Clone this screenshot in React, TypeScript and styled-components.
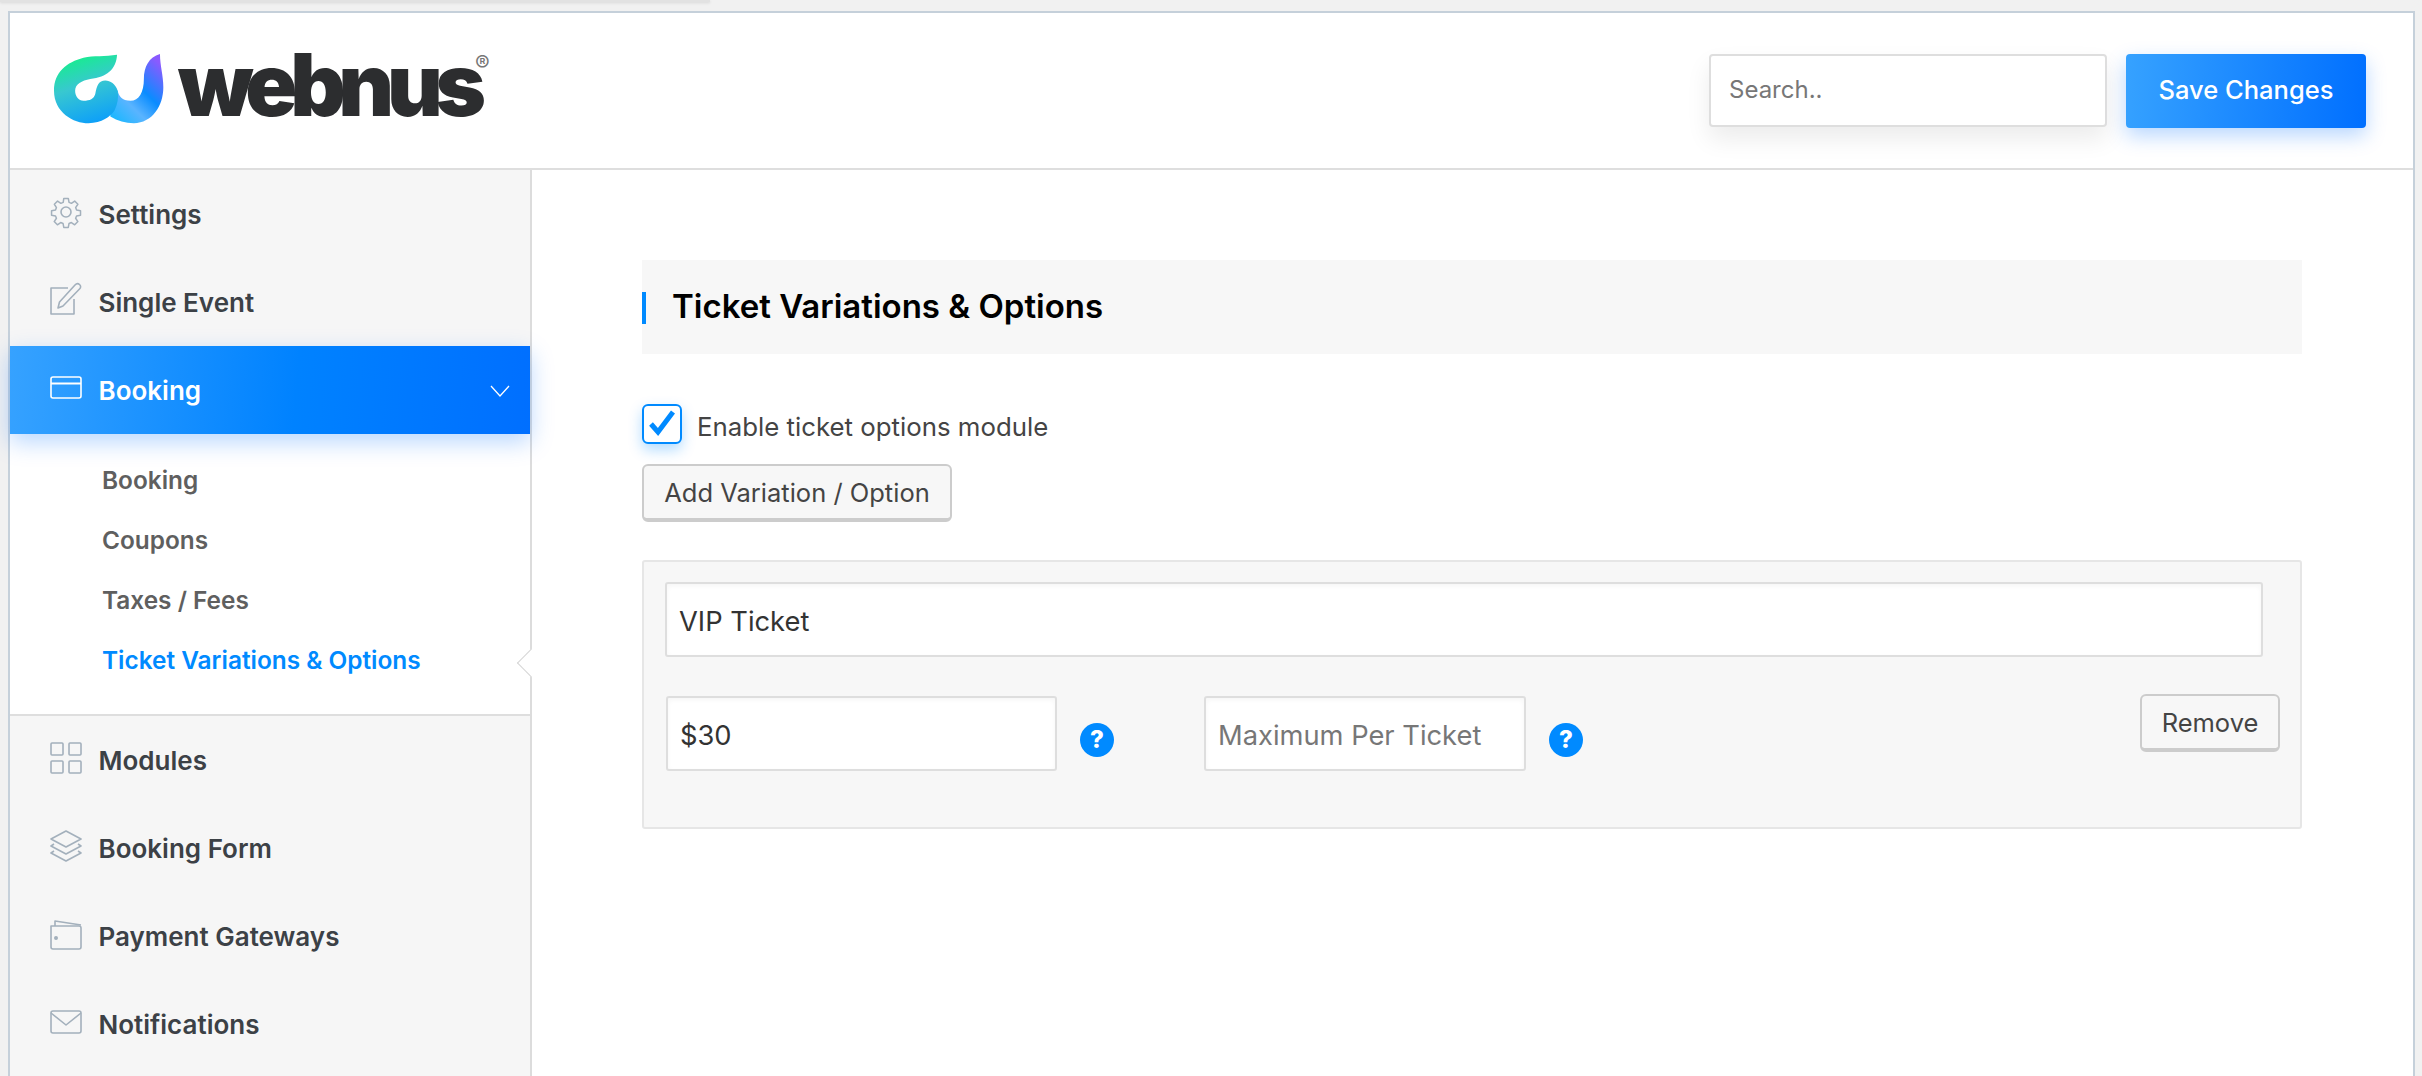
import { createGlobalStyle, styled } from "styled-components";
import { ReactNode } from "react";

const GlobalStyle = createGlobalStyle`
  html, body {
    margin: 0;
    height: 100%;
    background: #f1f1f1;
    overflow: hidden;
  }
  * { box-sizing: border-box; }
  body {
    font-family: Inter, "Liberation Sans", sans-serif;
    -webkit-font-smoothing: antialiased;
  }
`;

const Page = styled.div`
  height: 1076px;
  overflow: hidden;
`;
const TopStrip = styled.div`
  width: 710px;
  height: 2px;
  margin-bottom: 9px;
  background: #e2e2e2;
  box-shadow: 0 1px 3px rgba(0, 0, 0, 0.12);
`;
const Frame = styled.div`
  width: 2407px;
  margin-left: 8px;
  height: 1065px;
  border: 2px solid #c5d0da;
  border-bottom: 0;
  background: #fff;
  display: flex;
  flex-direction: column;
`;
const Header = styled.header`
  height: 157px;
  flex: none;
  border-bottom: 2px solid #dedede;
  padding: 41px 47px 0 44px;
  display: flex;
  justify-content: space-between;
  align-items: flex-start;
`;
const Logo = styled.div`
  display: flex;
  align-items: flex-start;
  gap: 14px;
  position: relative;
`;
const LogoMark = styled.svg`
  width: 110px;
  height: 70px;
  display: block;
`;
const Wordmark = styled.span`
  font-size: 86px;
  font-weight: 900;
  line-height: 70px;
  letter-spacing: -7.3px;
  color: #2c2d2f;
  margin-top: -4px;
`;
const Registered = styled.span`
  position: absolute;
  left: 421px;
  top: -3px;
  font-size: 22px;
  line-height: 24px;
  color: #777;
`;
const HeaderActions = styled.div`
  display: flex;
  gap: 19px;
`;
const SearchInput = styled.input`
  width: 398px;
  height: 73px;
  border: 2px solid #dedede;
  border-radius: 4px;
  padding: 0 18px 2px;
  font: 400 24px Inter, sans-serif;
  background: #fff;
  outline: none;
  box-shadow: 0 12px 24px rgba(0, 0, 0, 0.08);
  &::placeholder { color: #777; opacity: 1; }
`;
const SaveButton = styled.button`
  width: 240px;
  height: 74px;
  border: 0;
  border-radius: 4px;
  padding: 0 0 4px;
  color: #fff;
  font: 500 25.5px Inter, sans-serif;
  background: linear-gradient(95deg, #36a2ff 0%, #006fff 100%);
  box-shadow: 0 8px 20px rgba(0, 111, 255, 0.28);
`;
const Body = styled.div`
  flex: 1;
  display: flex;
  min-height: 0;
`;
const Sidebar = styled.nav`
  width: 522px;
  flex: none;
  background: #f6f6f6;
  border-right: 2px solid #dcdcdc;
  position: relative;
`;
const NavItem = styled.div<{ $active?: boolean }>`
  height: 88px;
  padding: 1px 0 0 40px;
  display: flex;
  align-items: center;
  gap: 16.5px;
  font-size: 26px;
  font-weight: 600;
  color: ${(p) => (p.$active ? "#fff" : "#3c4146")};
  position: relative;
  ${(p) =>
    p.$active &&
    `
    background: linear-gradient(95deg, #36a2ff 0%, #0082ff 55%, #006fff 100%);
    box-shadow: 0 8px 22px rgba(0, 111, 255, 0.28);
    z-index: 1;
  `}
`;
const NavIcon = styled.svg`
  width: 32px;
  height: 36px;
  flex: none;
  margin-top: -6px;
  fill: none;
  stroke: currentColor;
  stroke-width: 1.6;
  stroke-linejoin: round;
`;
const IconTint = styled.span<{ $active?: boolean }>`
  display: flex;
  color: ${(p) => (p.$active ? "#fff" : "#a3b0bc")};
`;
const Chevron = styled.svg`
  position: absolute;
  right: 20px;
  top: 39px;
  width: 20px;
  height: 12px;
  fill: none;
  stroke: #fff;
  stroke-width: 1.3;
`;
const SubMenu = styled.div`
  background: #fff;
  border-bottom: 2px solid #dedede;
  padding: 16px 0 24px 92px;
  height: 282px;
  position: relative;
`;
const SubItem = styled.div<{ $active?: boolean }>`
  height: 60px;
  display: flex;
  align-items: center;
  font-size: 24.4px;
  font-weight: 600;
  color: ${(p) => (p.$active ? "#008aff" : "#5f5f5f")};
`;
const Notch = styled.span`
  position: absolute;
  right: -11px;
  top: 219px;
  width: 20px;
  height: 20px;
  background: #fff;
  border-left: 1.5px solid #d6d6d6;
  border-bottom: 1.5px solid #d6d6d6;
  transform: rotate(45deg);
`;
const Main = styled.main`
  flex: 1;
  padding: 90px 111px 0 110px;
  min-width: 0;
`;
const TitleBar = styled.div`
  height: 94px;
  background: #f7f7f7;
  display: flex;
  align-items: center;
  padding: 0 0 2px 30px;
  position: relative;
  &::before {
    content: "";
    position: absolute;
    left: 0;
    top: 32px;
    width: 4px;
    height: 32px;
    background: #008aff;
  }
`;
const Title = styled.h2`
  margin: 0;
  font-size: 33px;
  font-weight: 600;
  color: #000;
`;
const CheckRow = styled.label`
  margin-top: 50px;
  display: flex;
  align-items: center;
  gap: 15px;
  font-size: 25.8px;
  color: #444;
`;
const CheckBox = styled.span`
  width: 40px;
  height: 40px;
  border: 2px solid #008aff;
  border-radius: 6px;
  background: #fff;
  box-shadow: 0 6px 14px rgba(0, 138, 255, 0.3);
  display: flex;
  align-items: center;
  justify-content: center;
`;
const CheckIcon = styled.svg`
  width: 36px;
  height: 36px;
  fill: none;
  stroke: #008aff;
  stroke-width: 5;
`;
const CheckText = styled.span`
  margin-top: 5px;
`;
const GreyButton = styled.button<{ $wide?: boolean }>`
  width: ${(p) => (p.$wide ? "310px" : "140px")};
  height: 58px;
  flex: none;
  padding: 1px 0 0;
  border: 2px solid #ccc;
  border-bottom-width: 4px;
  border-radius: 6px;
  background: #f7f7f7;
  color: #444;
  font: 400 25.5px Inter, sans-serif;
`;
const AddRow = styled.div`
  margin-top: 20px;
`;
const Panel = styled.section`
  margin-top: 38px;
  height: 269px;
  background: #f7f7f7;
  border: 2px solid #e6e6e6;
  border-radius: 3px;
  padding: 20px 20px 0 21px;
`;
const TextInput = styled.input<{ $width: number }>`
  width: ${(p) => p.$width}px;
  height: 75px;
  flex: none;
  border: 2px solid #dedede;
  border-radius: 3px;
  padding: 3px 12px 0;
  font: 400 27.3px Inter, sans-serif;
  color: #333;
  background: #fff;
  outline: none;
  box-shadow: inset 0 2px 5px rgba(0, 0, 0, 0.04);
  &::placeholder { color: #777; opacity: 1; }
`;
const NameRow = styled.div`
  display: flex;
`;
const PriceRow = styled.div`
  margin-top: 39px;
  padding-left: 1px;
  display: flex;
  align-items: flex-start;
`;
const Help = styled.span<{ $gapAfter?: number }>`
  width: 34px;
  height: 34px;
  flex: none;
  margin: 27px ${(p) => p.$gapAfter ?? 0}px 0 23px;
  border-radius: 50%;
  background: #008aff;
  color: #fff;
  font-size: 24px;
  font-weight: 800;
  line-height: 34px;
  text-align: center;
`;
const RemoveSlot = styled.div`
  margin: -2px 0 0 auto;
`;

const NavEntry = ({
  label,
  active,
  children,
}: {
  label: string;
  active?: boolean;
  children: ReactNode;
}) => (
  <NavItem $active={active}>
    <IconTint $active={active}>
      <NavIcon viewBox="0 0 32 36">{children}</NavIcon>
    </IconTint>
    {label}
    {active && (
      <Chevron viewBox="0 0 20 12">
        <path d="M1 1l9 10 9-10" />
      </Chevron>
    )}
  </NavItem>
);

const gearPath =
  "M13.6 2.6h4.8l.8 4.2 2.5 1 3.5-2.4 3.4 3.4-2.4 3.5 1 2.5 4.2.8v4.8l-4.2.8-1 2.5 2.4 3.5-3.4 3.4-3.5-2.4-2.5 1-.8 4.2h-4.8l-.8-4.2-2.5-1-3.5 2.4-3.4-3.4 2.4-3.5-1-2.5-4.2-.8v-4.8l4.2-.8 1-2.5L3.6 8.800l3.4-3.4 3.5 2.4 2.500-1z";

const App = () => (
  <Page>
    <GlobalStyle />
    <TopStrip />
    <Frame>
      <Header>
        <Logo>
          <LogoMark viewBox="72 76 328 208">
            <defs>
              <linearGradient id="logoLeft" x1="0.3" y1="0" x2="0.6" y2="1">
                <stop offset="0" stopColor="#14f088" />
                <stop offset="0.45" stopColor="#38c8d0" />
                <stop offset="1" stopColor="#0ea0f8" />
              </linearGradient>
              <linearGradient id="logoRight" x1="0" y1="1" x2="0.75" y2="0">
                <stop offset="0" stopColor="#0cb8ff" />
                <stop offset="0.35" stopColor="#5ab4ff" />
                <stop offset="0.6" stopColor="#0a8cff" />
                <stop offset="1" stopColor="#8a5aff" />
              </linearGradient>
            </defs>
            <path
              fill="url(#logoRight)"
              d="M240 262C262 275 285 282 310 282C365 282 398 230 398 175C398 140 388 110 388 76C355 85 340 115 340 150C340 190 325 215 300 215C275 215 265 200 262 185L240 190Z"
            />
            <path
              fill="url(#logoLeft)"
              d="M260 78C225 84 190 80 160 87C110 100 72 130 72 185C72 250 130 282 175 282C215 282 240 262 252 245C262 225 265 205 262 185C255 165 240 155 225 155C205 155 200 170 195 195C190 210 180 215 160 215C145 215 135 200 135 185C135 165 155 155 180 150C230 145 258 120 260 78Z"
            />
          </LogoMark>
          <Wordmark>webnus</Wordmark>
          <Registered>®</Registered>
        </Logo>
        <HeaderActions>
          <SearchInput placeholder="Search.." />
          <SaveButton>Save Changes</SaveButton>
        </HeaderActions>
      </Header>
      <Body>
        <Sidebar>
          <NavEntry label="Settings">
            <path d={gearPath} transform="translate(1 2) scale(.94)" />
            <circle cx="16" cy="18" r="5" />
          </NavEntry>
          <NavEntry label="Single Event">
            <path d="M24 17v15H1V6h17" />
            <path d="M8 26l1.500-6L25 3c1.500-1.600 3-1.800 4.500-.5s1.500 3 0 4.500L13 24z" />
          </NavEntry>
          <NavEntry label="Booking" active>
            <rect x="1" y="7" width="30" height="21" rx="2" />
            <path d="M1 13.500h30" strokeWidth="2" />
          </NavEntry>
          <SubMenu>
            <SubItem>Booking</SubItem>
            <SubItem>Coupons</SubItem>
            <SubItem>Taxes / Fees</SubItem>
            <SubItem $active>Ticket Variations &amp; Options</SubItem>
            <Notch />
          </SubMenu>
          <NavEntry label="Modules">
            <rect x="1" y="3" width="12" height="12" rx="1" />
            <rect x="19" y="3" width="12" height="12" rx="1" />
            <rect x="1" y="21" width="12" height="12" rx="1" />
            <rect x="19" y="21" width="12" height="12" rx="1" />
          </NavEntry>
          <NavEntry label="Booking Form">
            <path d="M16 3l15 8-15 8-15-8z" />
            <path d="M4 16l-3 2 15 8 15-8-3-2" />
            <path d="M4 23l-3 2 15 8 15-8-3-2" />
          </NavEntry>
          <NavEntry label="Payment Gateways">
            <path d="M3 10h26a2 2 0 0 1 2 2v19a2 2 0 0 1-2 2H3a2 2 0 0 1-2-2V10z" />
            <path d="M5 10V5l26 4" />
            <circle cx="6" cy="22" r="1.200" fill="currentColor" />
          </NavEntry>
          <NavEntry label="Notifications">
            <rect x="1" y="7" width="30" height="22" rx="2" />
            <path d="M1 9l15 12L31 9" />
          </NavEntry>
        </Sidebar>
        <Main>
          <TitleBar>
            <Title>Ticket Variations &amp; Options</Title>
          </TitleBar>
          <CheckRow>
            <CheckBox>
              <CheckIcon viewBox="0 0 36 36">
                <path d="M7 18l7 8L29 6" />
              </CheckIcon>
            </CheckBox>
            <CheckText>Enable ticket options module</CheckText>
          </CheckRow>
          <AddRow>
            <GreyButton $wide>Add Variation / Option</GreyButton>
          </AddRow>
          <Panel>
            <NameRow>
              <TextInput $width={1598} defaultValue="VIP Ticket" />
            </NameRow>
            <PriceRow>
              <TextInput $width={391} defaultValue="$30" />
              <Help $gapAfter={90}>?</Help>
              <TextInput $width={322} placeholder="Maximum Per Ticket" />
              <Help>?</Help>
              <RemoveSlot>
                <GreyButton>Remove</GreyButton>
              </RemoveSlot>
            </PriceRow>
          </Panel>
        </Main>
      </Body>
    </Frame>
  </Page>
);

export default App;
